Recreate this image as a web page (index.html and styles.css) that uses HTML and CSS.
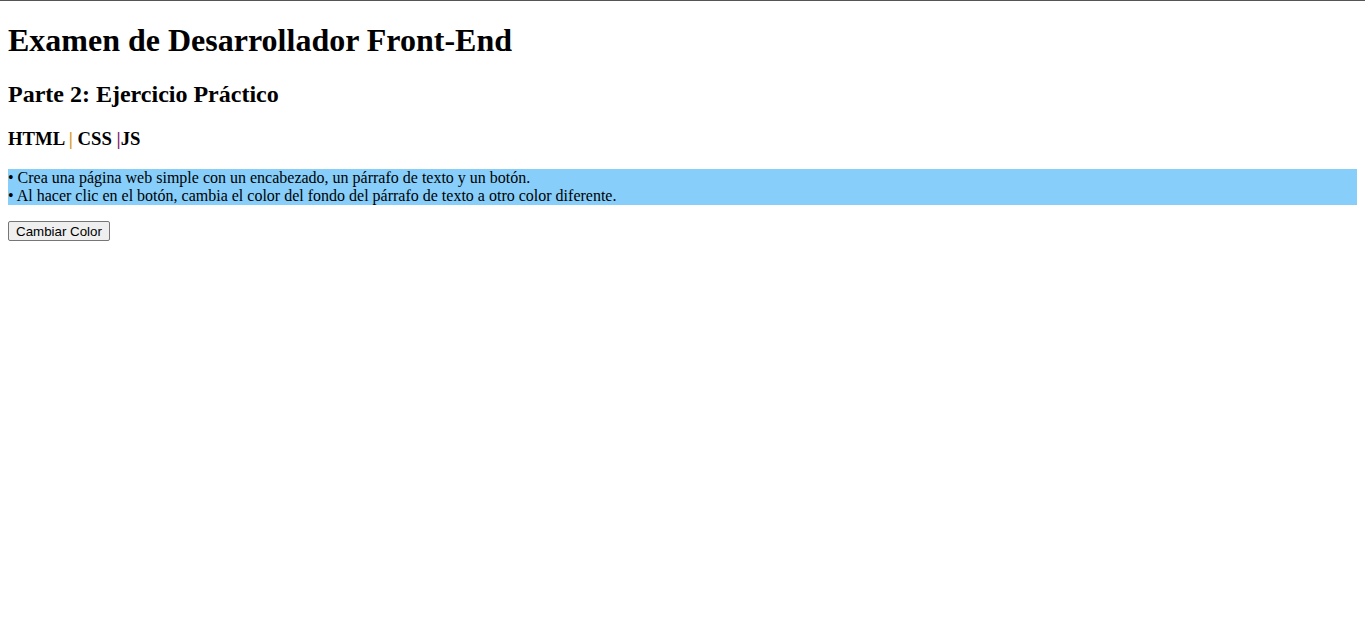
FILE: index.html
```html
<!DOCTYPE html>
<html lang="es">
<head>
<meta charset="utf-8">
<title>Examen</title>
<link rel="stylesheet" href="styles.css">
</head>
<body>
<h1 class="title">Examen de Desarrollador Front-End</h1>
<h2 class="subtitle">Parte 2: Ejercicio Práctico</h2>
<h3 class="tech">HTML <span class="pipe-orange">|</span> CSS <span class="pipe-purple">|</span>JS</h3>
<p class="task">• Crea una página web simple con un encabezado, un párrafo de texto y un botón.<br>• Al hacer clic en el botón, cambia el color del fondo del párrafo de texto a otro color diferente.</p>
<button class="btn">Cambiar Color</button>
</body>
</html>
```
FILE: styles.css
```css
html {
  border-top: 1px solid #555;
}
body {
  margin: 8px;
  font-family: "Liberation Serif", "Times New Roman", serif;
  color: #000;
  background: #fff;
}
.title {
  font-size: 32px;
  margin: 13px 0 22px;
}
.subtitle {
  font-size: 24px;
  margin: 20px 0;
}
.tech {
  font-size: 18.72px;
  margin: 18px 0 19px;
}
.pipe-orange {
  color: #d99a1a;
}
.pipe-purple {
  color: #8b1a6b;
}
.task {
  background: #87cefa;
  font-size: 16px;
  margin: 16px 0;
}
.btn {
  font-family: "Liberation Sans", Arial, sans-serif;
  font-size: 13.333px;
  height: 20px;
  padding: 1px 7px;
  border: 1px solid #767676;
  border-radius: 2px;
  background: #efefef;
  color: #000;
}
```
